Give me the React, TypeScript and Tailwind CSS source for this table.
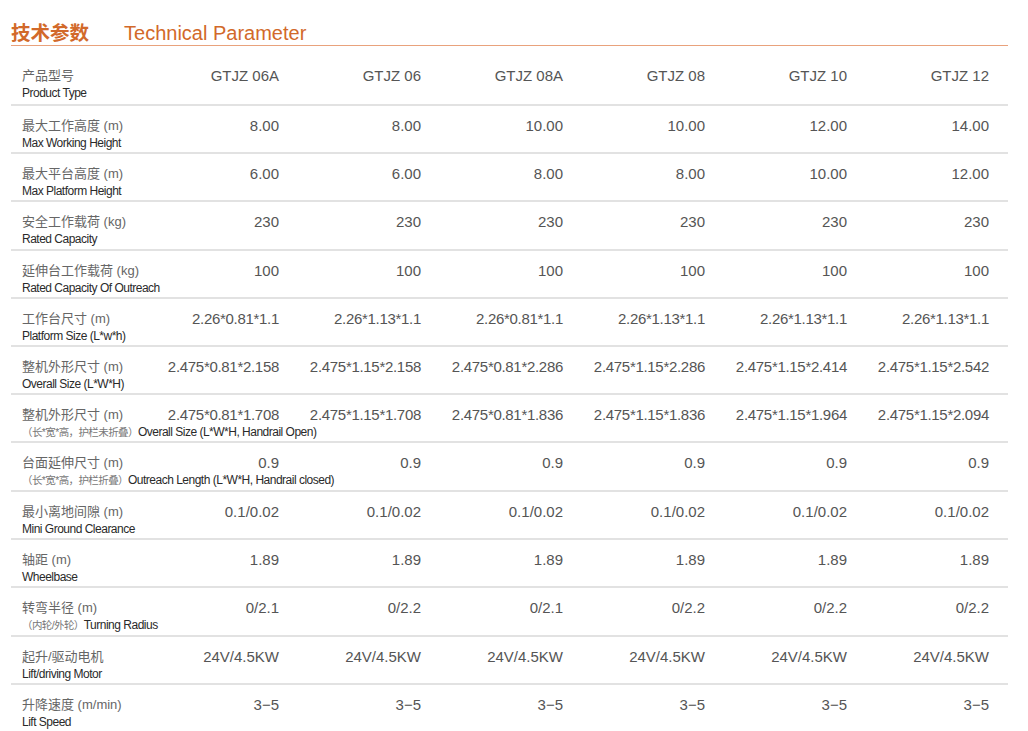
import React from 'react';

interface SpecRow {
  zh: string;
  zhNote?: string;
  en: string;
  values: string[];
  tall?: boolean;
}

const models = ['GTJZ 06A', 'GTJZ 06', 'GTJZ 08A', 'GTJZ 08', 'GTJZ 10', 'GTJZ 12'];

const rows: SpecRow[] = [
  { zh: '最大工作高度 (m)', en: 'Max Working Height', values: ['8.00', '8.00', '10.00', '10.00', '12.00', '14.00'] },
  { zh: '最大平台高度 (m)', en: 'Max Platform Height', values: ['6.00', '6.00', '8.00', '8.00', '10.00', '12.00'] },
  { zh: '安全工作载荷 (kg)', en: 'Rated Capacity', values: ['230', '230', '230', '230', '230', '230'], tall: true },
  { zh: '延伸台工作载荷 (kg)', en: 'Rated Capacity Of Outreach', values: ['100', '100', '100', '100', '100', '100'] },
  {
    zh: '工作台尺寸 (m)',
    en: 'Platform Size (L*w*h)',
    values: ['2.26*0.81*1.1', '2.26*1.13*1.1', '2.26*0.81*1.1', '2.26*1.13*1.1', '2.26*1.13*1.1', '2.26*1.13*1.1'],
  },
  {
    zh: '整机外形尺寸 (m)',
    en: 'Overall Size (L*W*H)',
    values: ['2.475*0.81*2.158', '2.475*1.15*2.158', '2.475*0.81*2.286', '2.475*1.15*2.286', '2.475*1.15*2.414', '2.475*1.15*2.542'],
  },
  {
    zh: '整机外形尺寸 (m)',
    zhNote: '（长*宽*高，护栏未折叠）',
    en: 'Overall Size (L*W*H, Handrail Open)',
    values: ['2.475*0.81*1.708', '2.475*1.15*1.708', '2.475*0.81*1.836', '2.475*1.15*1.836', '2.475*1.15*1.964', '2.475*1.15*2.094'],
  },
  {
    zh: '台面延伸尺寸 (m)',
    zhNote: '（长*宽*高，护栏折叠）',
    en: 'Outreach Length (L*W*H, Handrail closed)',
    values: ['0.9', '0.9', '0.9', '0.9', '0.9', '0.9'],
    tall: true,
  },
  { zh: '最小离地间隙 (m)', en: 'Mini Ground Clearance', values: ['0.1/0.02', '0.1/0.02', '0.1/0.02', '0.1/0.02', '0.1/0.02', '0.1/0.02'] },
  { zh: '轴距 (m)', en: 'Wheelbase', values: ['1.89', '1.89', '1.89', '1.89', '1.89', '1.89'] },
  {
    zh: '转弯半径 (m)',
    zhNote: '（内轮/外轮）',
    en: 'Turning Radius',
    values: ['0/2.1', '0/2.2', '0/2.1', '0/2.2', '0/2.2', '0/2.2'],
    tall: true,
  },
  { zh: '起升/驱动电机', en: 'Lift/driving Motor', values: ['24V/4.5KW', '24V/4.5KW', '24V/4.5KW', '24V/4.5KW', '24V/4.5KW', '24V/4.5KW'] },
  { zh: '升降速度 (m/min)', en: 'Lift Speed', values: ['3−5', '3−5', '3−5', '3−5', '3−5', '3−5'] },
];

const font = "font-['Liberation_Sans','Noto_Sans_CJK_SC',sans-serif]";

const ValueCells: React.FC<{ values: string[] }> = ({ values }) => (
  <>
    {values.map((v, i) => (
      <div
        key={i}
        className={
          v.length > 10
            ? 'w-[142px] shrink-0 text-right text-[15px] leading-[17px] tracking-[-0.3px] text-[#555]'
            : 'w-[142px] shrink-0 text-right text-[15px] leading-[17px] text-[#555]'
        }
      >
        {v}
      </div>
    ))}
  </>
);

const SubLabel: React.FC<{ note?: string; en: string }> = ({ note, en }) => (
  <div className="mt-[2px] pl-[11px] whitespace-nowrap text-[12px] leading-[15px] tracking-[-0.5px] text-[#2a2a2a]">
    {note && <span className="text-[10.5px] tracking-[-0.6px] text-[#777]">{note}</span>}
    {en}
  </div>
);

export default function App() {
  return (
    <div className={`${font} min-h-[731px] w-[1028px] bg-white pl-[11px]`}>
      <div className="w-[997px]">
        {/* Title */}
        <div className="flex h-[46px] items-end gap-[35px] border-b-[1.5px] border-[#e9a27c]">
          <span className="text-[19.5px] font-bold leading-[24px] text-[#d2692a]">技术参数</span>
          <span className="text-[20px] leading-[24px] text-[#d2692a]">Technical Parameter</span>
        </div>

        {/* Header row */}
        <div className="h-[60px] border-b-2 border-[#e2e2e2] pt-[21px]">
          <div className="flex items-center">
            <div className="w-[126px] shrink-0 pl-[11px] text-[13px] leading-[17px] text-[#666]">产品型号</div>
            <ValueCells values={models} />
          </div>
          <SubLabel en="Product Type" />
        </div>

        {/* Spec rows */}
        {rows.map((row, idx) => (
          <div
            key={idx}
            className={
              idx === rows.length - 1
                ? 'h-[47px] pt-[11px]'
                : row.tall
                  ? 'h-[49px] border-b-2 border-[#e2e2e2] pt-[11px]'
                  : 'h-[48px] border-b-2 border-[#e2e2e2] pt-[11px]'
            }
          >
            <div className="flex items-center">
              <div className="w-[126px] shrink-0 whitespace-nowrap pl-[11px] text-[13px] leading-[17px] text-[#666]">
                {row.zh}
              </div>
              <ValueCells values={row.values} />
            </div>
            <SubLabel note={row.zhNote} en={row.en} />
          </div>
        ))}
      </div>
    </div>
  );
}
